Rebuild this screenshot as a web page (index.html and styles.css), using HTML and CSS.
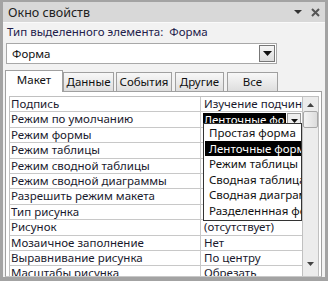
FILE: index.html
```html
<!DOCTYPE html>
<html lang="ru">

<head>
    <meta charset="UTF-8">
    <title>Окно свойств</title>
    <link rel="stylesheet" href="styles.css">
</head>

<body>

    <div class="frame">
        <div class="title">
            <span class="title-text">Окно свойств</span>
            <span class="title-btns">
                <svg width="10" height="6" viewBox="0 0 10 6"><path d="M1 1h8L5 5z" fill="#333"/></svg>
                <svg width="9" height="9" viewBox="0 0 9 9"><path d="M1 1l7 7M8 1L1 8" stroke="#555" stroke-width="2"/></svg>
            </span>
        </div>

        <div class="content">
            <div class="sel-type">Тип выделенного элемента:&nbsp; Форма</div>

            <div class="combo">
                <span>Форма</span>
                <span class="combo-btn">
                    <svg width="9" height="5" viewBox="0 0 9 5"><path d="M0 0h9L4.5 5z" fill="#111"/></svg>
                </span>
            </div>

            <div class="tabs">
                <div class="tab active">Макет</div>
                <div class="tab t-data">Данные</div>
                <div class="tab t-events">События</div>
                <div class="tab t-other">Другие</div>
                <div class="tab t-all">Все</div>
            </div>

            <div class="panel">
                <div class="grid">
                    <div class="rows">
                        <div class="row"><div class="name">Подпись</div><div class="val">Изучение подчин</div></div>
                        <div class="row"><div class="name">Режим по умолчанию</div>
                            <div class="val editing">
                                <span class="sel-text">Ленточные фо</span>
                                <span class="cell-btn">
                                    <svg width="7" height="4" viewBox="0 0 7 4"><path d="M0 0h7L3.5 4z" fill="#111"/></svg>
                                </span>
                            </div>
                        </div>
                        <div class="row"><div class="name">Режим формы</div><div class="val"></div></div>
                        <div class="row"><div class="name">Режим таблицы</div><div class="val"></div></div>
                        <div class="row"><div class="name">Режим сводной таблицы</div><div class="val"></div></div>
                        <div class="row"><div class="name">Режим сводной диаграммы</div><div class="val"></div></div>
                        <div class="row"><div class="name">Разрешить режим макета</div><div class="val"></div></div>
                        <div class="row"><div class="name">Тип рисунка</div><div class="val">Внедренное</div></div>
                        <div class="row"><div class="name">Рисунок</div><div class="val">(отсутствует)</div></div>
                        <div class="row"><div class="name">Мозаичное заполнение</div><div class="val">Нет</div></div>
                        <div class="row"><div class="name">Выравнивание рисунка</div><div class="val">По центру</div></div>
                        <div class="row"><div class="name">Масштабы рисунка</div><div class="val">Обрезать</div></div>
                    </div>

                    <div class="scroll">
                        <svg class="arrow" width="7" height="4" viewBox="0 0 7 4"><path d="M0 4h7L3.5 0z" fill="#444"/></svg>
                        <div class="thumb"></div>
                        <div class="track"></div>
                        <svg class="arrow" width="7" height="4" viewBox="0 0 7 4"><path d="M0 0h7L3.5 4z" fill="#444"/></svg>
                    </div>

                    <!-- раскрытый список значения "Режим по умолчанию" -->
                    <ul class="drop">
                        <li>Простая форма</li>
                        <li class="on">Ленточные формы</li>
                        <li>Режим таблицы</li>
                        <li>Сводная таблица</li>
                        <li>Сводная диаграмма</li>
                        <li>Разделеннная форма</li>
                    </ul>
                </div>
            </div>
        </div>
    </div>

</body>

</html>
```

FILE: styles.css
```css
* {
    box-sizing: border-box;
    font-family: 'Noto Sans', 'Open Sans', Arial, sans-serif;
}

html,
body {
    margin: 0;
    padding: 0;
    width: 328px;
    height: 281px;
    overflow: hidden;
    font-size: 11.5px;
    color: #1a1a2e;
}

.frame {
    width: 328px;
    height: 281px;
    background: #a3a3a3;
    padding: 2px 3px 4px 3px;
    display: flex;
    flex-direction: column;
}

.title {
    height: 20px;
    background: #d8d8d8;
    display: flex;
    align-items: center;
    justify-content: space-between;
    padding: 0 5px 0 5px;
    font-size: 12.5px;
    color: #222;
}

.title-btns {
    display: flex;
    align-items: center;
    gap: 8px;
}

.content {
    flex: 1;
    background: #f2f2f2;
    border-top: 1px solid #fafafa;
    padding: 0 3px 0 2px;
    display: flex;
    flex-direction: column;
    min-height: 0;
}

.sel-type {
    height: 20px;
    line-height: 18px;
    padding-left: 2px;
    color: #22204a;
}

.combo {
    width: 271px;
    height: 21px;
    margin-left: 1px;
    background: white;
    border: 1px solid #a8a8a8;
    display: flex;
    align-items: center;
    justify-content: space-between;
    padding: 0 1px 0 5px;
    color: #111;
}

.combo-btn {
    width: 16px;
    height: 17px;
    border: 1px solid #777;
    background: linear-gradient(#f6f6f6, #dcdcdc);
    display: flex;
    align-items: center;
    justify-content: center;
}

.tabs {
    display: flex;
    align-items: flex-end;
    margin-top: 5px;
    height: 22px;
}

.tab {
    height: 19px;
    padding: 0;
    margin-right: 2px;
    border: 1px solid #a0a0a0;
    border-bottom: none;
    background: linear-gradient(#f8f8f8, #dedede);
    line-height: 18px;
    color: #111;
    text-align: center;
    white-space: nowrap;
}

.tab.active {
    height: 22px;
    width: 58px;
    background: white;
    position: relative;
    top: 1px;
    margin-right: 0;
}

.t-data {
    width: 51px;
}

.t-events {
    width: 56px;
}

.t-other {
    width: 49px;
    margin-left: 1px;
}

.t-all {
    width: 51px;
    margin-left: 1px;
}

.panel {
    flex: 1;
    min-height: 0;
    background: white;
    border: 1px solid #a0a0a0;
    border-bottom-color: #c8c8c8;
    padding: 4px 2px 0 3px;
}

.grid {
    position: relative;
    display: flex;
    height: 100%;
    overflow: hidden;
    border: 1px solid #c0c0c0;
    border-bottom: none;
}

.rows {
    width: 294px;
    border-right: 1px solid #c0c0c0;
}

.row {
    display: flex;
    height: 15.4px;
    border-bottom: 1px solid #c8c8c8;
    line-height: 14px;
    color: #1a1a2e;
    white-space: nowrap;
}

.name {
    width: 191px;
    padding-left: 1px;
    border-right: 1px solid #c8c8c8;
    overflow: hidden;
}

.val {
    flex: 1;
    padding-left: 3px;
    overflow: hidden;
}

.val.editing {
    display: flex;
    padding: 1px 1px 0 2px;
}

.sel-text {
    width: 83px;
    background: black;
    color: white;
    padding-left: 1px;
    line-height: 13px;
    overflow: hidden;
}

.cell-btn {
    width: 14px;
    height: 13px;
    margin-left: 1px;
    border: 1px solid #999;
    background: #eee;
    display: flex;
    align-items: flex-end;
    justify-content: center;
    padding-bottom: 2px;
}

.scroll {
    width: 18px;
    background: #ececec;
    display: flex;
    flex-direction: column;
    align-items: center;
    padding: 6px 0 10px 0;
}

.scroll .arrow {
    flex: none;
}

.thumb {
    width: 15px;
    height: 17px;
    margin-top: 4px;
    border: 1px solid #a8a8a8;
    border-radius: 2px;
    background: linear-gradient(90deg, #f4f4f4, #dcdcdc);
}

.track {
    flex: 1;
}

.drop {
    position: absolute;
    left: 193px;
    top: 26px;
    width: 99px;
    margin: 0;
    padding: 1px 0 1px 1px;
    list-style: none;
    background: white;
    border: 1px solid #333;
}

.drop li {
    height: 15.6px;
    line-height: 15px;
    padding-left: 4px;
    white-space: nowrap;
    overflow: hidden;
    color: #111;
}

.drop li.on {
    background: black;
    color: white;
}
```
